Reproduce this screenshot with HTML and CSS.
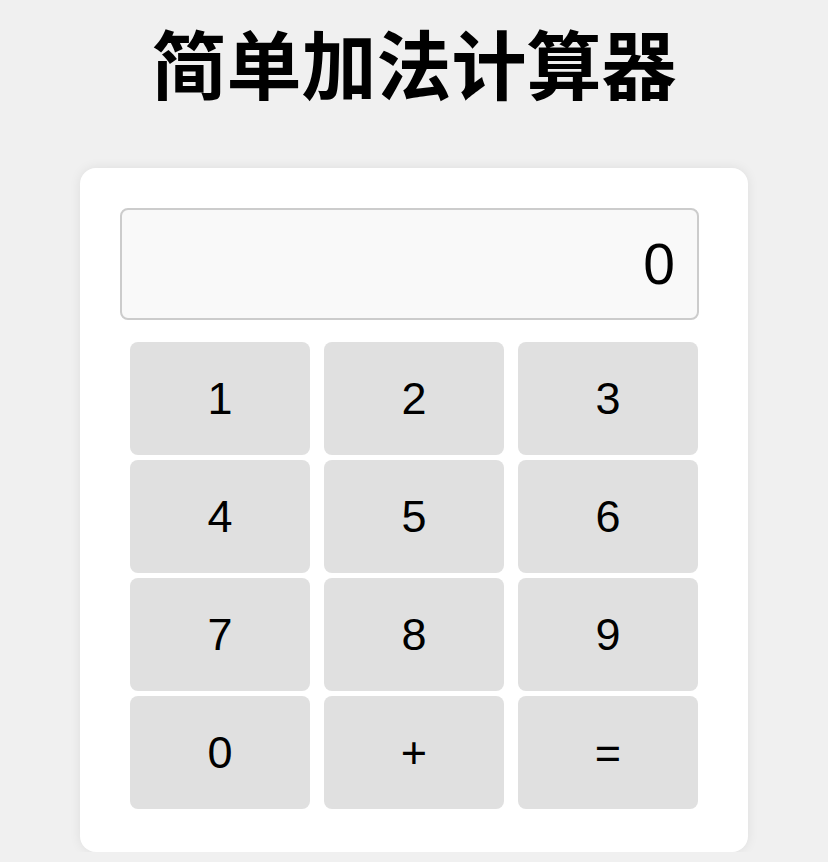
FILE: index.html
```html
<!DOCTYPE html>
<html lang="zh-CN">
<head>
    <meta charset="UTF-8">
    <meta name="viewport" content="width=device-width, initial-scale=1.0">
    <title>简单加法计算器</title>
    <link rel="stylesheet" href="styles.css">
</head>
<body>

    <h1 class="title">简单加法计算器</h1>

    <div class="calculator">
        <!-- Display -->
        <div class="display" id="display">0</div>

        <!-- Keys -->
        <div class="keys">
            <button class="key">1</button>
            <button class="key">2</button>
            <button class="key">3</button>
            <button class="key">4</button>
            <button class="key">5</button>
            <button class="key">6</button>
            <button class="key">7</button>
            <button class="key">8</button>
            <button class="key">9</button>
            <button class="key">0</button>
            <button class="key">+</button>
            <button class="key">=</button>
        </div>
    </div>

</body>
</html>
```

FILE: styles.css
```css
body {
    font-family: 'Liberation Sans', Arial, 'Noto Sans CJK SC', sans-serif;
    margin: 0;
    padding: 0;
    background-color: #f0f0f0;
}

.title {
    font-family: 'Noto Sans CJK SC', sans-serif;
    font-size: 75px;
    font-weight: bold;
    line-height: 1;
    text-align: center;
    margin: 0;
    padding-top: 24px;
    color: #000;
}

.calculator {
    width: 668px;
    margin: 69px auto 0;
    padding: 40px 0 43px;
    box-sizing: border-box;
    background-color: #fff;
    border-radius: 16px;
    box-shadow: 0 0 12px rgba(0, 0, 0, 0.08);
}

.display {
    width: 579px;
    height: 112px;
    margin-left: 40px;
    box-sizing: border-box;
    padding-right: 22px;
    display: flex;
    align-items: center;
    justify-content: flex-end;
    font-size: 57px;
    color: #000;
    background-color: #f9f9f9;
    border: 2px solid #cccccc;
    border-radius: 8px;
}

.keys {
    display: grid;
    grid-template-columns: repeat(3, 180px);
    grid-auto-rows: 113px;
    column-gap: 14px;
    row-gap: 5px;
    margin-top: 22px;
    padding-left: 50px;
}

.key {
    font-family: 'Liberation Sans', Arial, sans-serif;
    font-size: 45px;
    color: #000;
    background-color: #e0e0e0;
    border: none;
    border-radius: 8px;
    padding: 0;
    cursor: pointer;
}
```
